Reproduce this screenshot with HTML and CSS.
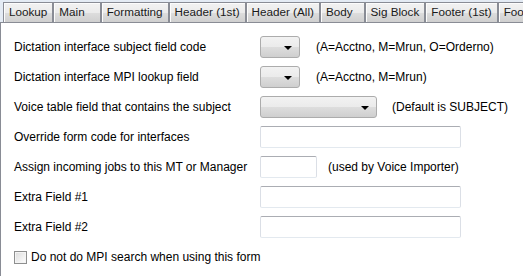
FILE: index.html
```html
<!DOCTYPE html>
<html lang="en">

<head>
    <meta charset="UTF-8">
    <title>Form Settings - Lookup</title>
    <link rel="stylesheet" href="styles.css">
</head>

<body>
    <div class="tabs">
        <div class="tab">Lookup</div>
        <div class="tab tab-main">Main</div>
        <div class="tab">Formatting</div>
        <div class="tab">Header (1st)</div>
        <div class="tab">Header (All)</div>
        <div class="tab tab-body">Body</div>
        <div class="tab">Sig Block</div>
        <div class="tab">Footer (1st)</div>
        <div class="tab">Footer (All)</div>
    </div>

    <div class="panel">
        <div class="form-row">
            <label>Dictation interface subject field code</label>
            <div class="field">
                <div class="combo"><span class="arrow"></span></div>
                <span class="hint">(A=Acctno, M=Mrun, O=Orderno)</span>
            </div>
        </div>

        <div class="form-row">
            <label>Dictation interface MPI lookup field</label>
            <div class="field">
                <div class="combo"><span class="arrow"></span></div>
                <span class="hint">(A=Acctno, M=Mrun)</span>
            </div>
        </div>

        <div class="form-row">
            <label>Voice table field that contains the subject</label>
            <div class="field">
                <div class="combo combo-wide"><span class="arrow"></span></div>
                <span class="hint">(Default is SUBJECT)</span>
            </div>
        </div>

        <div class="form-row">
            <label>Override form code for interfaces</label>
            <div class="field">
                <input type="text" class="textbox">
            </div>
        </div>

        <div class="form-row">
            <label>Assign incoming jobs to this MT or Manager</label>
            <div class="field">
                <input type="text" class="textbox textbox-short">
                <span class="hint hint-near">(used by Voice Importer)</span>
            </div>
        </div>

        <div class="form-row">
            <label>Extra Field #1</label>
            <div class="field">
                <input type="text" class="textbox">
            </div>
        </div>

        <div class="form-row">
            <label>Extra Field #2</label>
            <div class="field">
                <input type="text" class="textbox">
            </div>
        </div>

        <div class="check-row">
            <span class="checkbox"></span>
            <span>Do not do MPI search when using this form</span>
        </div>
    </div>
</body>
</html>
```

FILE: styles.css
```css
body {
    font-family: 'Liberation Sans', Arial, sans-serif;
    font-size: 12px;
    color: #000;
    margin: 0;
    padding: 0;
    background-color: #fff;
    width: 523px;
    height: 276px;
    overflow: hidden;
}

.tabs {
    display: flex;
    gap: 0;
    height: 20px;
    padding: 2px 0 0 3px;
    background-color: #e4ebf4;
    white-space: nowrap;
    overflow: hidden;
}

.tab {
    flex: none;
    height: 19px;
    line-height: 18px;
    padding: 0 5px;
    border: 1px solid #898c95;
    border-bottom: none;
    box-shadow: inset 1px 1px 0 #fcfcfc;
    background: linear-gradient(#f2f2f2, #ebebeb 50%, #dddddd 51%, #cfcfcf);
    color: #1a1a1a;
    font-size: 11.7px;
}

.tab-main {
    padding-right: 15px;
}

.tab-body {
    padding-right: 11px;
}

.panel {
    border-top: 1px solid #898c95;
    border-left: 1px solid #898c95;
    height: 253px;
    padding: 9px 0 0 13px;
}

.form-row {
    display: grid;
    grid-template-columns: 246px 1fr;
    align-items: center;
    height: 30px;
}

.field {
    display: flex;
    align-items: center;
}

.combo {
    position: relative;
    width: 38px;
    height: 20px;
    border: 1px solid #acacac;
    border-radius: 3px;
    background: linear-gradient(#f2f2f2, #ebebeb 50%, #dddddd 51%, #cfcfcf);
}

.combo-wide {
    width: 115px;
}

.arrow {
    position: absolute;
    right: 7px;
    top: 9px;
    border-left: 4px solid transparent;
    border-right: 4px solid transparent;
    border-top: 4px solid #000;
}

.hint {
    margin-left: 16px;
}

.combo-wide + .hint {
    margin-left: 15px;
}

.hint-near {
    margin-left: 11px;
}

.textbox {
    width: 201px;
    height: 22px;
    margin: 0;
    padding: 0;
    box-sizing: border-box;
    border: 1px solid #dbdfe6;
    border-top-color: #abadb3;
    border-bottom-color: #e3e9ef;
    border-radius: 2px;
    background-color: #fff;
}

.textbox-short {
    width: 57px;
}

.check-row {
    display: flex;
    align-items: center;
    gap: 4px;
    height: 30px;
}

.checkbox {
    width: 11px;
    height: 11px;
    border: 1px solid #8e8f8f;
    background: linear-gradient(135deg, #dcdcdc, #fefefe);
    box-shadow: inset 0 0 0 1px #f4f4f4;
}
```
